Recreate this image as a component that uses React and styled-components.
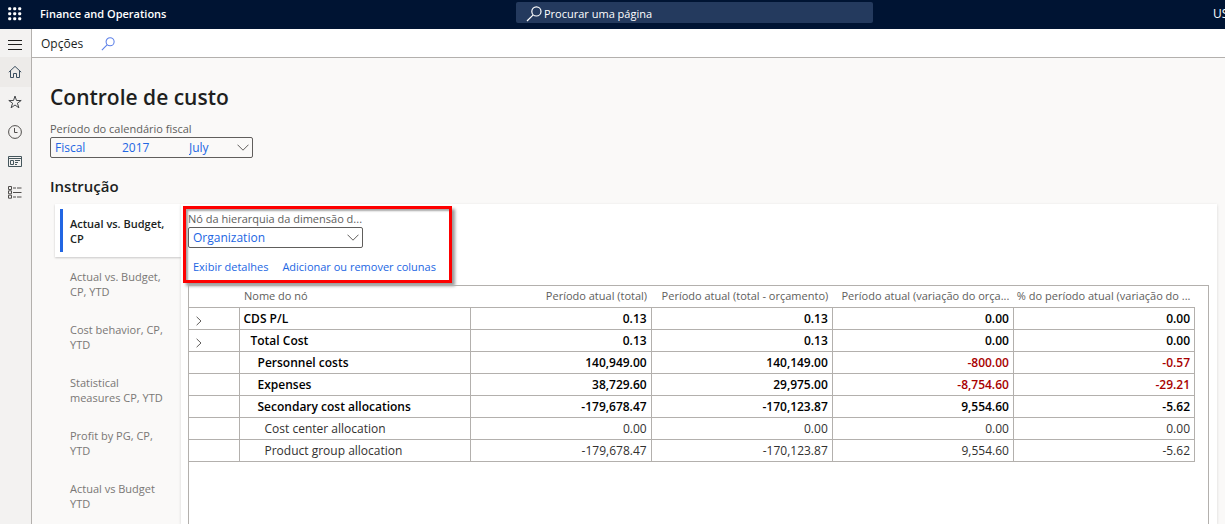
import React from "react";
import styled, { createGlobalStyle } from "styled-components";

const columns = [
  "Período atual (total)",
  "Período atual (total - orçamento)",
  "Período atual (variação do orça...",
  "% do período atual (variação do ...",
];

const rows = [
  { name: "CDS P/L", level: 0, bold: true, expandable: true, values: ["0.13", "0.13", "0.00", "0.00"] },
  { name: "Total Cost", level: 1, bold: true, expandable: true, values: ["0.13", "0.13", "0.00", "0.00"] },
  { name: "Personnel costs", level: 2, bold: true, alert: true, values: ["140,949.00", "140,149.00", "-800.00", "-0.57"] },
  { name: "Expenses", level: 2, bold: true, alert: true, values: ["38,729.60", "29,975.00", "-8,754.60", "-29.21"] },
  { name: "Secondary cost allocations", level: 2, bold: true, values: ["-179,678.47", "-170,123.87", "9,554.60", "-5.62"] },
  { name: "Cost center allocation", level: 3, values: ["0.00", "0.00", "0.00", "0.00"] },
  { name: "Product group allocation", level: 3, values: ["-179,678.47", "-170,123.87", "9,554.60", "-5.62"] },
];

const statements = [
  "Actual vs. Budget, CP",
  "Actual vs. Budget, CP, YTD",
  "Cost behavior, CP, YTD",
  "Statistical measures CP, YTD",
  "Profit by PG, CP, YTD",
  "Actual vs Budget YTD",
];

// Icons
const SearchIcon = ({ size }) => (
  <svg width={size} height={size} viewBox="0 0 16 16" fill="none" stroke="currentColor" strokeWidth="1.2" aria-hidden="true">
    <circle cx="10.4" cy="5.4" r="4.6" />
    <path d="M7.2 8.8L1 15" />
  </svg>
);

const ChevronDown = () => (
  <svg width="12" height="7" viewBox="0 0 12 7" fill="none" stroke="#605e5c" aria-hidden="true">
    <path d="M0.5 0.7L6 6.2L11.5 0.7" />
  </svg>
);

const ChevronRight = () => (
  <svg width="6" height="10" viewBox="0 0 6 10" fill="none" stroke="#605e5c" aria-hidden="true">
    <path d="M0.6 0.8L5 5L0.6 9.2" />
  </svg>
);

const WaffleIcon = () => (
  <svg width="14" height="14" viewBox="0 0 14 14" fill="#fff" aria-hidden="true">
    {[0, 5, 10].map((y) => [0, 5, 10].map((x) => <rect key={`${x}-${y}`} x={x + 0.2} y={y + 0.2} width="3" height="3" rx="1" />))}
  </svg>
);

const MenuIcon = () => (
  <svg width="14" height="10" viewBox="0 0 14 10" stroke="#201f1e" aria-hidden="true">
    <path d="M0 0.5H14M0 4.5H14M0 9.5H14" />
  </svg>
);

const HomeIcon = () => (
  <svg width="14" height="14" viewBox="0 0 14 14" fill="none" stroke="#3c4f60" aria-hidden="true">
    <path d="M0.8 7.2L7 1.4L13.2 7.2M2.5 5.8V12.5H5.5V8.5H8.5V12.5H11.5V5.8" />
  </svg>
);

const StarIcon = () => (
  <svg width="14" height="14" viewBox="0 0 14 14" fill="none" stroke="#45484b" aria-hidden="true">
    <path d="M7 1L8.5 5.5H13.2L9.4 8.2L10.9 12.8L7 10L3.1 12.8L4.6 8.2L0.8 5.5H5.5Z" />
  </svg>
);

const ClockIcon = () => (
  <svg width="14" height="14" viewBox="0 0 14 14" fill="none" stroke="#504e4c" aria-hidden="true">
    <circle cx="7" cy="7" r="6.4" />
    <path d="M6.5 3V7.5H9.5" />
  </svg>
);

const WorkspaceIcon = () => (
  <svg width="14" height="12" viewBox="0 0 14 12" fill="none" stroke="#45565c" aria-hidden="true">
    <path d="M0.5 0.5H13.5V10.5H0.5ZM0.5 2.5H13.5M2.5 4.5H5.5V8.5H2.5ZM7 4.5H12M7 6.5H10M7 8.5H9" />
  </svg>
);

const ModulesIcon = () => (
  <svg width="14" height="13" viewBox="0 0 14 13" fill="none" stroke="#504e4c" aria-hidden="true">
    <path d="M0.5 0.5H3.5V3.5H0.5ZM0.5 4.8H3.5V7.8H0.5ZM0.5 9.2H3.5V12.2H0.5ZM5 2H8M9 2H13.5M5 6.5H13.5M5 11H8M9 11H13.5" />
  </svg>
);

export default function App() {
  return (
    <Page>
      <GlobalStyle />
      <Header>
        <Brand>
          <BareButton aria-label="Apps">
            <WaffleIcon />
          </BareButton>
          <BrandName>Finance and Operations</BrandName>
        </Brand>
        <SearchBox>
          <SearchIcon size={16} />
          <input type="search" aria-label="Procurar uma página" placeholder="Procurar uma página" />
        </SearchBox>
        <Company>US</Company>
      </Header>
      <Body>
        <Rail aria-label="Menu">
          <RailButton $short aria-label="Menu"><MenuIcon /></RailButton>
          <RailButton $active aria-label="Home"><HomeIcon /></RailButton>
          <RailButton aria-label="Favorites"><StarIcon /></RailButton>
          <RailButton aria-label="Recent"><ClockIcon /></RailButton>
          <RailButton aria-label="Workspaces"><WorkspaceIcon /></RailButton>
          <RailButton aria-label="Modules"><ModulesIcon /></RailButton>
        </Rail>
        <Main>
          <ActionBar>
            <ActionButton>Opções</ActionButton>
            <ActionButton $link aria-label="Procurar"><SearchIcon size={14} /></ActionButton>
          </ActionBar>
          <Content>
            <Title>Controle de custo</Title>
            <PeriodField>
              <FieldLabel as="span" id="period">Período do calendário fiscal</FieldLabel>
              <PeriodBox role="group" aria-labelledby="period">
                <PlainSelect aria-label="Calendário"><option>Fiscal</option></PlainSelect>
                <PlainSelect aria-label="Ano"><option>2017</option></PlainSelect>
                <PlainSelect aria-label="Período"><option>July</option></PlainSelect>
                <ChevronDown />
              </PeriodBox>
            </PeriodField>
            <Subtitle>Instrução</Subtitle>
            <Statement>
              <Tabs role="tablist" aria-orientation="vertical">
                {statements.map((name, i) => (
                  <Tab key={name} role="tab" aria-selected={i === 0} $selected={i === 0}>
                    <span>{name}</span>
                  </Tab>
                ))}
              </Tabs>
              <Panel role="tabpanel">
                <Callout>
                  <NodeField>
                    <FieldLabel htmlFor="node">Nó da hierarquia da dimensão d...</FieldLabel>
                    <SelectBox>
                      <PlainSelect id="node"><option>Organization</option></PlainSelect>
                      <ChevronDown />
                    </SelectBox>
                  </NodeField>
                  <Links>
                    <LinkButton>Exibir detalhes</LinkButton>
                    <LinkButton>Adicionar ou remover colunas</LinkButton>
                  </Links>
                </Callout>
                <Grid>
                  <Table>
                    <colgroup>
                      <ExpandCol />
                      <NameCol />
                    </colgroup>
                    <thead>
                      <tr>
                        <HeadCell aria-label="Expandir" />
                        <HeadCell $left>Nome do nó</HeadCell>
                        {columns.map((c) => <HeadCell key={c}>{c}</HeadCell>)}
                      </tr>
                    </thead>
                    <tbody>
                      {rows.map((row) => (
                        <Row key={row.name} $bold={row.bold}>
                          <ExpandCell>
                            {row.expandable && (
                              <BareButton aria-label={`Expandir ${row.name}`}><ChevronRight /></BareButton>
                            )}
                          </ExpandCell>
                          <NameCell $level={row.level}>{row.name}</NameCell>
                          {row.values.map((v, i) => (
                            <ValueCell key={i} $alert={row.alert && i > 1}>{v}</ValueCell>
                          ))}
                        </Row>
                      ))}
                    </tbody>
                  </Table>
                </Grid>
              </Panel>
            </Statement>
          </Content>
        </Main>
      </Body>
    </Page>
  );
}

const GlobalStyle = createGlobalStyle`
  * {
    box-sizing: border-box;
  }
  body {
    margin: 0;
    background: #faf9f8;
    color: #201f1e;
    font-family: "Segoe UI", "Open Sans", "Noto Sans", sans-serif;
    font-size: 12px;
    line-height: 16px;
  }
  button, input, select {
    font: inherit;
    color: inherit;
    margin: 0;
    padding: 0;
    border: 0;
    background: none;
  }
  svg {
    display: block;
    flex: none;
  }
`;
const Page = styled.div`
  display: flex;
  flex-direction: column;
  min-height: 100vh;
  overflow: hidden;
`;
const Header = styled.header`
  display: grid;
  grid-template-columns: 516px 357px 1fr;
  height: 29px;
  background: #001433;
  color: #fff;
`;
const Brand = styled.div`
  display: flex;
  align-items: center;
  gap: 18px;
  padding: 0 0 2px 8px;
`;
const BareButton = styled.button`
  display: block;
`;
const BrandName = styled.span`
  font-size: 11px;
  font-weight: 600;
`;
const SearchBox = styled.div`
  display: flex;
  align-items: center;
  gap: 2px;
  height: 21px;
  margin-top: 2px;
  padding: 2px 10px 0;
  border-radius: 2px;
  background: #243a5e;
  input {
    flex: 1;
    outline: none;
    font-size: 11px;
  }
  input::placeholder {
    color: #fff;
    opacity: 1;
  }
`;
const Company = styled.span`
  justify-self: end;
  width: 12px;
  padding-top: 6px;
  overflow: hidden;
`;
const Body = styled.div`
  display: flex;
  flex: 1;
`;
const Rail = styled.nav`
  flex: none;
  width: 32px;
  border-right: 1px solid #b3b0ad;
  background: #f3f2f1;
`;
const RailButton = styled.button`
  display: flex;
  align-items: center;
  width: 100%;
  height: ${(p) => (p.$short ? "28px" : "30px")};
  padding: ${(p) => (p.$short ? "4px 0 0 8px" : "0 0 0 8px")};
  background: ${(p) => (p.$active ? "#edebe9" : "none")};
`;
const Main = styled.main`
  display: flex;
  flex-direction: column;
  flex: 1;
  min-width: 0;
`;
const ActionBar = styled.div`
  display: flex;
  align-items: center;
  gap: 18px;
  height: 29px;
  padding: 2px 0 0 9px;
  border-bottom: 1px solid #b3b0ad;
  background: #fff;
`;
const ActionButton = styled.button`
  color: ${(p) => (p.$link ? "#5b7fe8" : "#201f1e")};
`;
const Content = styled.div`
  display: flex;
  flex-direction: column;
  flex: 1;
  padding: 23px 8px 0 18px;
`;
const Title = styled.h1`
  margin: 0;
  font-size: 21px;
  font-weight: 600;
  line-height: 32px;
`;
const PeriodField = styled.div`
  width: 203px;
  margin-top: 8px;
`;
const FieldLabel = styled.label`
  display: block;
  overflow: hidden;
  color: #605e5c;
  font-size: 11px;
  text-overflow: ellipsis;
  white-space: nowrap;
`;
const SelectBox = styled.div`
  display: flex;
  align-items: center;
  height: 21px;
  padding: 0 3px 0 4px;
  border: 1px solid #605e5c;
  border-radius: 2px;
  background: #fff;
`;
const PeriodBox = styled(SelectBox)`
  background: none;
  select {
    flex: 0 0 67px;
  }
  select:last-of-type {
    flex: 1;
  }
`;
const PlainSelect = styled.select`
  appearance: none;
  flex: 1;
  min-width: 0;
  color: #2266e3;
`;
const Subtitle = styled.h2`
  margin: 18px 0 0;
  font-size: 15px;
  font-weight: 600;
  line-height: 20px;
`;
const Statement = styled.section`
  display: flex;
  flex: 1;
  margin-top: 8px;
  padding-left: 5px;
`;
const Tabs = styled.div`
  flex: none;
  width: 126px;
`;
const Tab = styled.button`
  display: flex;
  width: 100%;
  height: 53px;
  padding: 5px;
  text-align: left;
  font-size: 11px;
  line-height: 15px;
  color: ${(p) => (p.$selected ? "#201f1e" : "#797775")};
  font-weight: ${(p) => (p.$selected ? 600 : 400)};
  background: ${(p) => (p.$selected ? "#fff" : "none")};
  box-shadow: ${(p) => (p.$selected ? "0 1px 2px rgba(0, 0, 0, 0.2)" : "none")};
  span {
    width: 108px;
    height: 43px;
    padding: 7px 0 6px 7px;
    border-left: 3px solid ${(p) => (p.$selected ? "#2266e3" : "transparent")};
  }
`;
const Panel = styled.div`
  position: relative;
  display: flex;
  flex-direction: column;
  flex: 1;
  min-width: 0;
  padding: 2px 8px 0 2px;
  background: #fff;
  box-shadow: 0 1px 3px rgba(0, 0, 0, 0.14);
`;
const Callout = styled.div`
  width: 269px;
  height: 77px;
  padding: 2px;
  border: 3px solid #fe0000;
  box-shadow: 3px 3px 3px rgba(0, 0, 0, 0.4), inset 2px 2px 2px rgba(0, 0, 0, 0.35);
`;
const NodeField = styled.div`
  width: 175px;
`;
const Links = styled.div`
  display: flex;
  gap: 14px;
  margin-top: 11px;
  padding-left: 5px;
`;
const LinkButton = styled.button`
  color: #2266e3;
  font-size: 11px;
  white-space: nowrap;
`;
const Grid = styled.div`
  flex: 1;
  margin: 2px 0 0 5px;
  padding-right: 13px;
  border: 1px solid #b3b0ad;
  border-bottom: 0;
`;
const Table = styled.table`
  width: 100%;
  border-collapse: collapse;
  table-layout: fixed;
`;
const ExpandCol = styled.col`
  width: 50px;
`;
const NameCol = styled.col`
  width: 231px;
`;
const HeadCell = styled.th`
  height: 21px;
  padding: 0 4px 0 ${(p) => (p.$left ? "5px" : "2px")};
  color: #605e5c;
  font-size: 11px;
  font-weight: 400;
  text-align: ${(p) => (p.$left ? "left" : "right")};
  white-space: nowrap;
`;
const Row = styled.tr`
  color: ${(p) => (p.$bold ? "#000" : "#323130")};
  font-weight: ${(p) => (p.$bold ? 600 : 400)};
`;
const Cell = styled.td`
  height: 22px;
  padding: 2px 4px 0;
  border: 1px solid #b3b0ad;
`;
const ExpandCell = styled(Cell)`
  padding: 5px 0 0 7px;
  border-left: 0;
`;
const NameCell = styled(Cell)`
  padding-left: ${(p) => 4 + p.$level * 7}px;
`;
const ValueCell = styled(Cell)`
  text-align: right;
  color: ${(p) => (p.$alert ? "#a80000" : "inherit")};
`;
